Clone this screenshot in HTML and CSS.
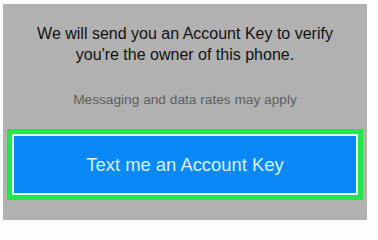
FILE: index.html
```html
<!DOCTYPE html>
<html>
<head>
<meta charset="utf-8">
<link rel="stylesheet" href="styles.css">
</head>
<body>
<div class="panel">
  <p class="lead">We will send you an Account Key to verify<br>you're the owner of this phone.</p>
  <p class="note">Messaging and data rates may apply</p>
  <div class="highlight">
    <button class="cta">Text me an Account Key</button>
  </div>
</div>
</body>
</html>
```
FILE: styles.css
```css
html, body {
  margin: 0;
  padding: 0;
  background: #fdfdfd;
  width: 378px;
  height: 229px;
  overflow: hidden;
}
body {
  padding: 4px 0 0 3px;
  box-sizing: border-box;
  font-family: "Liberation Sans", Arial, sans-serif;
}
.panel {
  width: 364px;
  height: 216px;
  background: #b1b1b1;
  display: flex;
  flex-direction: column;
  align-items: center;
  box-sizing: border-box;
  padding-top: 19px;
}
.lead {
  margin: 0;
  font-size: 16px;
  line-height: 21px;
  color: #111;
  text-align: center;
}
.note {
  margin: 27px 0 0;
  font-size: 13.7px;
  line-height: 16px;
  color: #5e5e5e;
}
.highlight {
  margin-top: 21px;
  margin-left: 4px;
  align-self: flex-start;
  width: 356px;
  height: 71px;
  box-sizing: border-box;
  border: 5px solid #1ee84a;
  background: #1ee84a;
}
.cta {
  display: block;
  width: 100%;
  height: 100%;
  box-sizing: border-box;
  border: 2px solid #eaf6ff;
  background: #0a88f8;
  color: #d8f4ff;
  font-family: "Liberation Sans", Arial, sans-serif;
  font-size: 18.4px;
  padding: 0;
  margin: 0;
  border-radius: 1px;
}
```
